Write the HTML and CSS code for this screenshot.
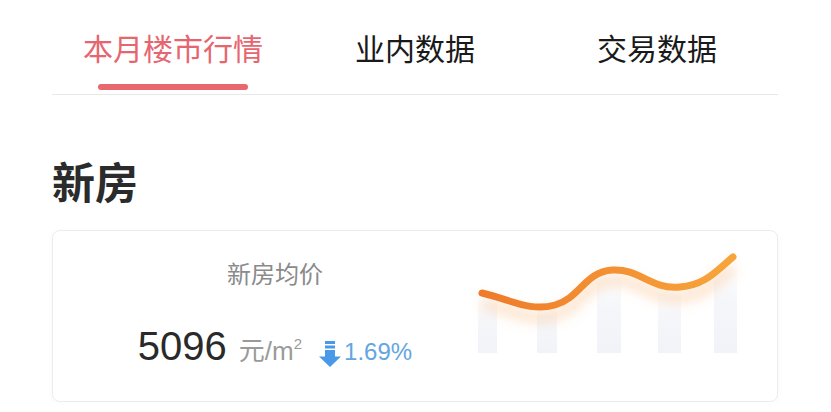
FILE: index.html
```html
<!DOCTYPE html>
<html lang="zh-CN">
<head>
<meta charset="utf-8">
<title>本月楼市行情</title>
<link rel="stylesheet" href="styles.css">
</head>
<body>
<div class="page">
  <nav class="tabs">
    <div class="tab active"><span class="tab-label">本月楼市行情</span><span class="tab-bar"></span></div>
    <div class="tab"><span class="tab-label">业内数据</span><span class="tab-bar"></span></div>
    <div class="tab"><span class="tab-label">交易数据</span><span class="tab-bar"></span></div>
  </nav>
  <h2 class="section-title">新房</h2>
  <div class="card">
    <div class="card-info">
      <div class="card-label">新房均价</div>
      <div class="value-row">
        <span class="value">5096</span>
        <span class="unit">元/m<sup>2</sup></span>
        <span class="change">
          <svg class="down-icon" width="22" height="26" viewBox="0 0 22 26">
            <rect x="6" y="0" width="10" height="3" fill="#4a98e8"/>
            <rect x="6" y="4.5" width="10" height="3" fill="#4a98e8"/>
            <rect x="6" y="9" width="10" height="7" fill="#4a98e8"/>
            <polygon points="0,15.5 22,15.5 11,26" fill="#4a98e8"/>
          </svg>
          <span class="change-text">1.69%</span>
        </span>
      </div>
    </div>
    <svg class="chart" width="306" height="170" viewBox="0 0 306 170">
      <defs>
        <linearGradient id="bar" x1="0" y1="0" x2="0" y2="1">
          <stop offset="0" stop-color="#f3f4f9" stop-opacity="0"/>
          <stop offset="0.45" stop-color="#f2f4f9" stop-opacity="0.8"/>
          <stop offset="1" stop-color="#f1f3f8"/>
        </linearGradient>
        <linearGradient id="line" x1="0" y1="0" x2="1" y2="0">
          <stop offset="0" stop-color="#ef7b2a"/>
          <stop offset="1" stop-color="#f7a53b"/>
        </linearGradient>
        <filter id="glow" x="-20%" y="-50%" width="140%" height="200%">
          <feGaussianBlur stdDeviation="6"/>
        </filter>
      </defs>
      <rect x="7" y="62" width="19" height="60" fill="url(#bar)"/>
      <rect x="66" y="72" width="20" height="50" fill="url(#bar)"/>
      <rect x="126" y="40" width="24" height="82" fill="url(#bar)"/>
      <rect x="187" y="56" width="23" height="66" fill="url(#bar)"/>
      <rect x="243" y="30" width="23" height="92" fill="url(#bar)"/>
      <path d="M11,72 C41,79 59,91 84,84 C109,77 114,51 141,49 C169,47 179,69 209,66 C234,64 244,51 262,36" fill="none" stroke="#f8a860" stroke-opacity="0.3" stroke-width="12" filter="url(#glow)"/>
      <path d="M11,62 C41,69 59,81 84,74 C109,67 114,41 141,39 C169,37 179,59 209,56 C234,54 244,41 262,26" fill="none" stroke="url(#line)" stroke-width="7" stroke-linecap="round"/>
    </svg>
  </div>
</div>
</body>
</html>
```

FILE: styles.css
```css
html, body {
  margin: 0;
  padding: 0;
  background: #ffffff;
}
body {
  font-family: "Noto Sans CJK SC", "Liberation Sans", sans-serif;
  color: #222;
}
.page {
  padding: 0 53px 0 52px;
}
.tabs {
  display: flex;
  border-bottom: 1px solid #e8e8e8;
}
.tab {
  flex: 1;
  display: flex;
  flex-direction: column;
  align-items: center;
  padding-top: 26px;
}
.tab-label {
  font-size: 30px;
  line-height: 42px;
  color: #1a1a1a;
  white-space: nowrap;
}
.tab-bar {
  width: 150px;
  height: 6px;
  margin-top: 16px;
  margin-bottom: 4px;
  border-radius: 3px;
  background: transparent;
}
.tab.active .tab-label {
  color: #e6666f;
}
.tab.active .tab-bar {
  background: #e9676f;
}
.section-title {
  margin: 60px 0 0;
  font-size: 43px;
  line-height: 50px;
  font-weight: 700;
  color: #2b2b2b;
}
.card {
  margin-top: 25px;
  height: 170px;
  border: 1px solid #ececec;
  border-radius: 8px;
  box-shadow: 0 2px 6px rgba(0, 0, 0, 0.03);
  display: flex;
  overflow: hidden;
}
.card-info {
  width: 418px;
  box-sizing: border-box;
  padding-left: 26px;
  padding-top: 26px;
  display: flex;
  flex-direction: column;
  align-items: center;
}
.card-label {
  font-size: 24px;
  line-height: 32px;
  color: #8a8a8a;
}
.value-row {
  margin-top: 35px;
  display: flex;
  align-items: baseline;
  white-space: nowrap;
}
.value {
  font-family: "Liberation Sans", sans-serif;
  font-size: 40px;
  line-height: 44px;
  color: #2a2a2a;
}
.unit {
  margin-left: 12px;
  font-size: 26px;
  color: #9a9a9a;
  font-family: "Liberation Sans", "Noto Sans CJK SC", sans-serif;
}
.unit sup {
  font-size: 15px;
  vertical-align: 11px;
  line-height: 0;
}
.change {
  margin-left: 17px;
  display: inline-flex;
  align-items: baseline;
}
.down-icon {
  align-self: center;
  margin-right: 3px;
  position: relative;
  top: 2px;
}
.change-text {
  font-family: "Liberation Sans", sans-serif;
  font-size: 24px;
  color: #63a6e0;
}
.chart {
  display: block;
  flex: none;
}
```
